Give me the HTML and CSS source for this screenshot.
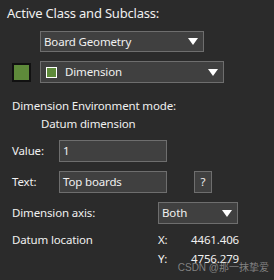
FILE: index.html
```html
<!DOCTYPE html>
<html>
<head>
<meta charset="utf-8">
<link rel="stylesheet" href="styles.css">
</head>
<body>
<div class="panel">
  <div class="title">Active Class and Subclass:</div>
  <div class="row r-class">
    <div class="select sel-class"><span>Board Geometry</span><i class="arrow"></i></div>
  </div>
  <div class="row r-sub">
    <div class="swatch"></div>
    <div class="select sel-sub"><span class="mini"></span><span>Dimension</span><i class="arrow"></i></div>
  </div>
  <div class="label mode">Dimension Environment mode:</div>
  <div class="label datum">Datum dimension</div>
  <div class="row r-value">
    <div class="lbl">Value:</div>
    <div class="input">1</div>
  </div>
  <div class="row r-text">
    <div class="lbl">Text:</div>
    <div class="input">Top boards</div>
    <div class="btn">?</div>
  </div>
  <div class="row r-axis">
    <div class="lbl wide">Dimension axis:</div>
    <div class="select sel-axis"><span>Both</span><i class="arrow"></i></div>
  </div>
  <div class="row r-loc">
    <div class="lbl wide">Datum location</div>
    <div class="coord">X:</div>
    <div class="num">4461.406</div>
  </div>
  <div class="row r-loc2">
    <div class="lbl wide"></div>
    <div class="coord">Y:</div>
    <div class="num">4756.279</div>
  </div>
  <div class="watermark">CSDN @那一抹挚爱</div>
</div>
</body>
</html>
```

FILE: styles.css
```css
html, body {
  margin: 0;
  padding: 0;
  background: #2b2b2b;
}
.panel {
  position: relative;
  width: 274px;
  height: 280px;
  font-family: "Noto Sans", "Open Sans", sans-serif;
  font-size: 11.5px;
  letter-spacing: -0.15px;
  color: #f0f0f0;
  box-sizing: border-box;
  padding-top: 5px;
}
.title {
  padding-left: 7px;
  line-height: 16px;
  font-size: 13px;
  letter-spacing: -0.2px;
}
.row {
  display: flex;
  align-items: center;
}
.select {
  box-sizing: border-box;
  background: #404040;
  border: 1px solid #6e6e6e;
  display: flex;
  align-items: center;
  padding-left: 3px;
  line-height: 16px;
}
.select span { flex: none; }
.arrow {
  margin-left: auto;
  margin-right: 5px;
  width: 0;
  height: 0;
  border-left: 5px solid transparent;
  border-right: 5px solid transparent;
  border-top: 7px solid #ffffff;
}
.r-class {
  margin-top: 10px;
  padding-left: 40px;
}
.sel-class {
  width: 164px;
  height: 21px;
}
.r-sub {
  margin-top: 9px;
  padding-left: 12px;
}
.swatch {
  box-sizing: border-box;
  width: 19px;
  height: 19px;
  background: #5e8a3a;
  border: 2px solid #111;
  margin-right: 9px;
}
.sel-sub {
  width: 184px;
  height: 22px;
  padding-left: 5px;
}
.mini {
  box-sizing: border-box;
  width: 11px;
  height: 11px;
  background: #5e8a3a;
  border: 1px solid #fff;
  margin-right: 8px;
}
.label {
  line-height: 16px;
}
.mode {
  margin-top: 15px;
  padding-left: 12px;
}
.datum {
  margin-top: 2px;
  padding-left: 41px;
}
.lbl {
  width: 47px;
  padding-left: 12px;
  line-height: 16px;
}
.lbl.wide {
  width: 146px;
}
.input {
  box-sizing: border-box;
  width: 108px;
  height: 22px;
  background: #404040;
  border: 1px solid #6e6e6e;
  padding-left: 3px;
  line-height: 20px;
}
.r-value {
  margin-top: 8px;
}
.r-text {
  margin-top: 9px;
}
.btn {
  box-sizing: border-box;
  margin-left: 27px;
  width: 18px;
  height: 22px;
  background: #404040;
  border: 1px solid #6e6e6e;
  text-align: center;
  line-height: 20px;
}
.r-axis {
  margin-top: 9px;
}
.sel-axis {
  width: 80px;
  height: 22px;
}
.r-loc {
  margin-top: 8px;
}
.r-loc2 {
  margin-top: 3px;
}
.coord {
  width: 30px;
  line-height: 16px;
}
.num {
  width: 51px;
  text-align: right;
  line-height: 16px;
}
.watermark {
  position: absolute;
  right: 5px;
  bottom: 7px;
  line-height: 11px;
  letter-spacing: 0;
  font-family: "Liberation Sans", "Noto Sans CJK SC", sans-serif;
  font-size: 10px;
  color: rgba(190, 190, 190, 0.6);
}
```
